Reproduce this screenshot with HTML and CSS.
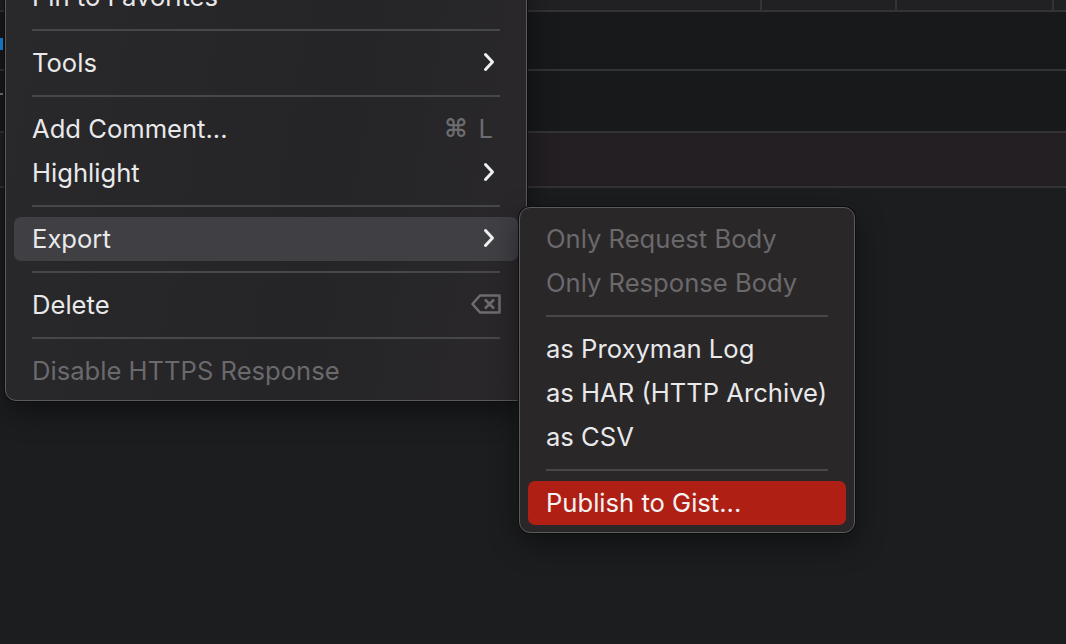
FILE: index.html
```html
<!DOCTYPE html>
<html lang="en">
<head>
  <meta charset="UTF-8">
  <title>Context Menu</title>
  <link rel="stylesheet" href="styles.css">
</head>
<body>

  <!-- Request list behind the menu -->
  <div class="table">
    <div class="row head">
      <div class="cell c1"></div>
      <div class="cell c2"></div>
      <div class="cell c3"></div>
      <div class="cell c4"></div>
    </div>
    <div class="row tall"><span class="peek blue"></span></div>
    <div class="row tall"><span class="peek gray"></span></div>
    <div class="row selected"></div>
  </div>

  <!-- Main context menu -->
  <div class="menu main-menu">
    <div class="item"><span class="label">Pin to Favorites</span></div>
    <div class="sep"></div>
    <div class="item">
      <span class="label">Tools</span>
      <svg class="chevron" viewBox="0 0 12 20"><path d="M2.5 2.5 L9.5 10 L2.5 17.5"/></svg>
    </div>
    <div class="sep"></div>
    <div class="item">
      <span class="label">Add Comment...</span>
      <span class="shortcut"><span class="cmd">⌘</span>L</span>
    </div>
    <div class="item">
      <span class="label">Highlight</span>
      <svg class="chevron" viewBox="0 0 12 20"><path d="M2.5 2.5 L9.5 10 L2.5 17.5"/></svg>
    </div>
    <div class="sep"></div>
    <div class="item open">
      <span class="label">Export</span>
      <svg class="chevron" viewBox="0 0 12 20"><path d="M2.5 2.5 L9.5 10 L2.5 17.5"/></svg>
    </div>
    <div class="sep"></div>
    <div class="item">
      <span class="label">Delete</span>
      <svg class="backspace" viewBox="0 0 30 20">
        <path d="M9 1.5 H28.5 V18.5 H9 L1.5 10 Z"/>
        <path d="M14 5.5 L23 14.5 M23 5.5 L14 14.5"/>
      </svg>
    </div>
    <div class="sep"></div>
    <div class="item disabled"><span class="label">Disable HTTPS Response</span></div>
  </div>

  <!-- Export submenu -->
  <div class="menu sub-menu">
    <div class="item disabled"><span class="label">Only Request Body</span></div>
    <div class="item disabled"><span class="label">Only Response Body</span></div>
    <div class="sep"></div>
    <div class="item"><span class="label">as Proxyman Log</span></div>
    <div class="item"><span class="label">as HAR (HTTP Archive)</span></div>
    <div class="item"><span class="label">as CSV</span></div>
    <div class="sep"></div>
    <div class="item active"><span class="label">Publish to Gist...</span></div>
  </div>

</body>
</html>
```

FILE: styles.css
```css
* {
  box-sizing: border-box;
  margin: 0;
  padding: 0;
}

body {
  font-family: Inter, "Noto Sans", sans-serif;
  background-color: #1c1d1f;
  width: 1066px;
  height: 644px;
  overflow: hidden;
  position: relative;
}

/* Table behind the menus */
.table {
  display: flex;
  flex-direction: column;
}

.row {
  border-bottom: 2px solid #333336;
  position: relative;
}

.row.head {
  height: 12px;
  display: flex;
  background-color: #212123;
}

.cell {
  height: 100%;
  border-right: 2px solid #333336;
}

.c1 { width: 762px; }
.c2 { width: 135px; }
.c3 { width: 157px; }
.c4 { flex: 1; border-right: none; }

.row.tall {
  height: 59px;
  background-color: #18191b;
}

.row.tall + .row.tall {
  height: 62px;
}

.row.selected {
  height: 55px;
  background-color: #231f22;
}

.peek {
  position: absolute;
  left: 0;
  width: 3px;
}

.peek.blue {
  top: 26px;
  height: 12px;
  background-color: #1e8ce6;
}

.peek.gray {
  top: 22px;
  height: 2px;
  background-color: #777;
}

/* Menus */
.menu {
  position: absolute;
  display: flex;
  flex-direction: column;
  border: 1px solid #5b5a5e;
  border-radius: 11px;
  background: linear-gradient(100deg, #29282b 0%, #252427 60%, #2a282b 100%);
  box-shadow: 0 0 0 1px #0e0e0f, 0 10px 30px rgba(0, 0, 0, 0.45);
  color: #e9e9ea;
  font-size: 25.6px;
}

.main-menu {
  left: 5px;
  top: -34px;
  width: 522px;
  padding: 8px 8px 7px 8px;
}

.sub-menu {
  left: 519px;
  top: 207px;
  width: 336px;
  padding: 9px 8px 7px 8px;
  background: #2a2729;
}

.item {
  height: 44px;
  display: flex;
  align-items: center;
  justify-content: space-between;
  padding: 0 23px 2px 18px;
  border-radius: 7px;
  white-space: nowrap;
}

.item.open {
  background-color: #403f44;
}

.item.active {
  background-color: #b01f13;
  color: #f3f3f3;
}

.item.disabled {
  color: #6a696c;
}

.sep {
  height: 22px;
  display: flex;
  align-items: center;
  padding: 0 18px;
}

.sep::before {
  content: "";
  display: block;
  width: 100%;
  height: 2px;
  background-color: #47464a;
}

.chevron {
  width: 12px;
  height: 20px;
  fill: none;
  stroke: #f0f0f0;
  stroke-width: 3;
  stroke-linecap: round;
  stroke-linejoin: round;
}

.shortcut {
  color: #6d6c70;
  display: flex;
  align-items: center;
  gap: 11px;
  margin-right: 2px;
}

.cmd {
  font-family: "DejaVu Sans", sans-serif;
  font-size: 25px;
  font-weight: bold;
}

.backspace {
  width: 30px;
  height: 20px;
  margin-right: -6px;
  fill: none;
  stroke: #6d6c70;
  stroke-width: 2.6;
  stroke-linejoin: round;
}
```
